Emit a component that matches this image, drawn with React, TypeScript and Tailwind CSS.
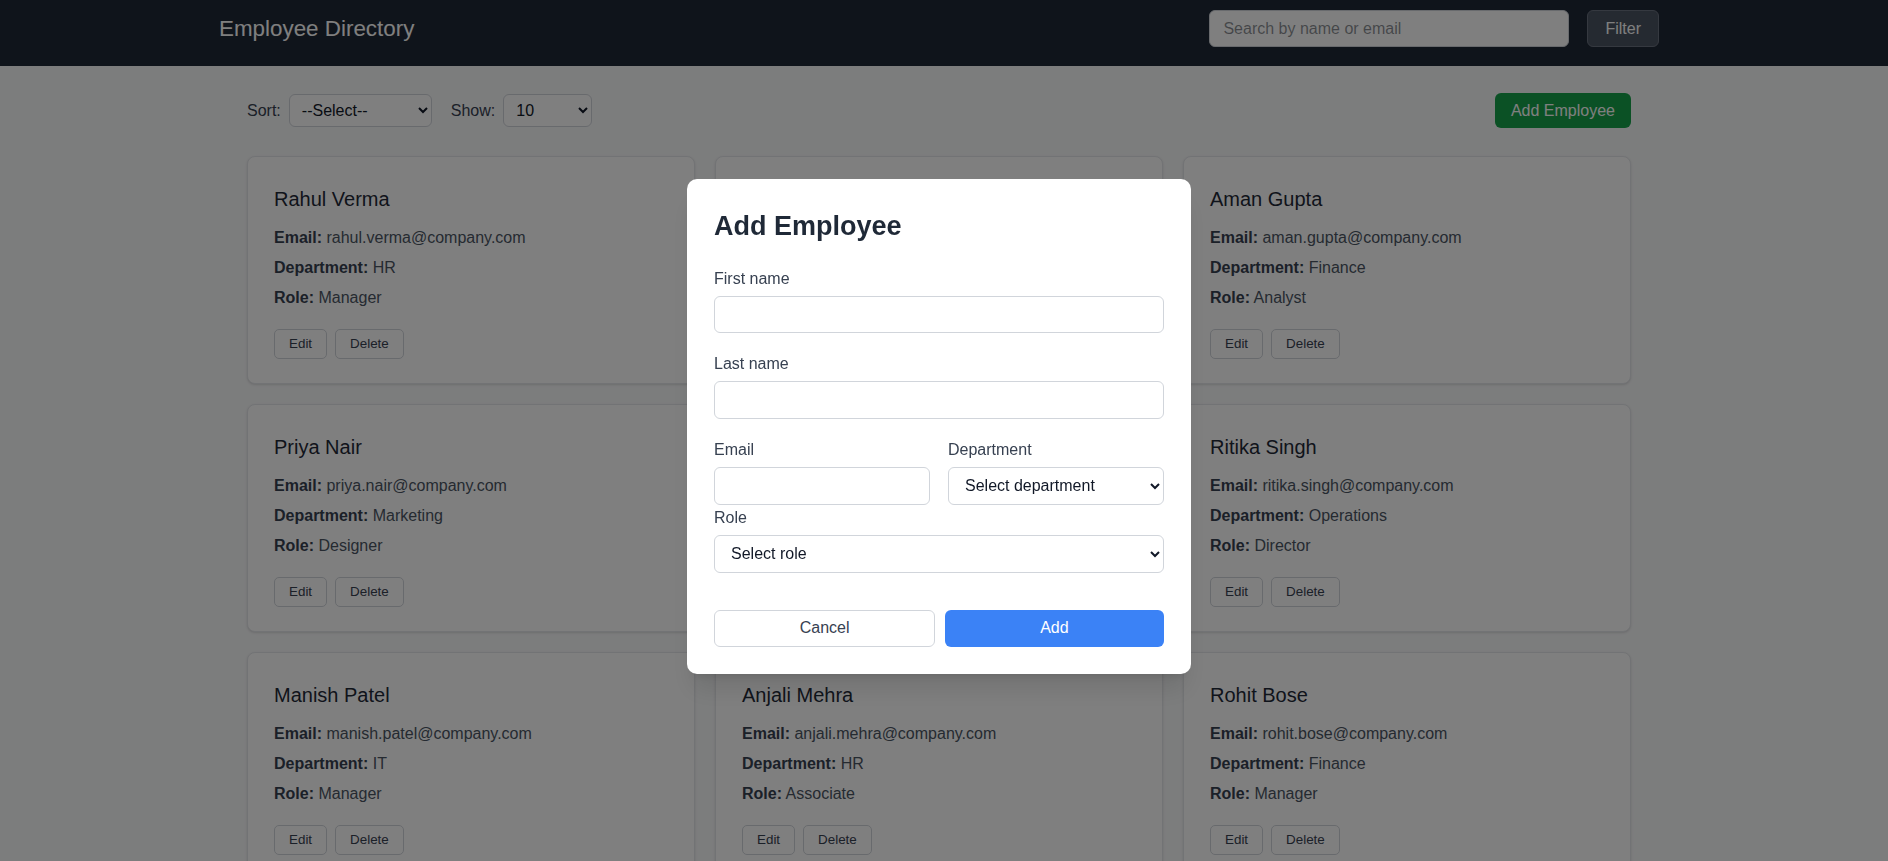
import React from 'react';

type Employee = {
  name: string;
  email: string;
  department: string;
  role: string;
};

const employees: Employee[] = [
  { name: 'Rahul Verma', email: 'rahul.verma@company.com', department: 'HR', role: 'Manager' },
  { name: 'Sneha Iyer', email: 'sneha.iyer@company.com', department: 'IT', role: 'Developer' },
  { name: 'Aman Gupta', email: 'aman.gupta@company.com', department: 'Finance', role: 'Analyst' },
  { name: 'Priya Nair', email: 'priya.nair@company.com', department: 'Marketing', role: 'Designer' },
  { name: 'Vikram Rao', email: 'vikram.rao@company.com', department: 'Sales', role: 'Executive' },
  { name: 'Ritika Singh', email: 'ritika.singh@company.com', department: 'Operations', role: 'Director' },
  { name: 'Manish Patel', email: 'manish.patel@company.com', department: 'IT', role: 'Manager' },
  { name: 'Anjali Mehra', email: 'anjali.mehra@company.com', department: 'HR', role: 'Associate' },
  { name: 'Rohit Bose', email: 'rohit.bose@company.com', department: 'Finance', role: 'Manager' },
];

function EmployeeCard({ emp }: { emp: Employee }) {
  return (
    <div className="rounded-lg border border-[#e5e7eb] bg-white px-[26px] pt-[26px] pb-[24.5px] shadow-sm">
      <h3 className="mt-[2px] mb-[12.5px] text-xl leading-7 text-[#1f2937]">{emp.name}</h3>
      <div className="space-y-[6px] text-base leading-6 text-[#4b5563]">
        <p>
          <strong className="font-bold text-[#374151]">Email:</strong> {emp.email}
        </p>
        <p>
          <strong className="font-bold text-[#374151]">Department:</strong> {emp.department}
        </p>
        <p>
          <strong className="font-bold text-[#374151]">Role:</strong> {emp.role}
        </p>
      </div>
      <div className="mt-[19px] flex gap-2">
        <button className="h-[30px] rounded-[5px] border border-[#d1d5db] px-[14px] text-[13.4px] text-[#374151]">
          Edit
        </button>
        <button className="h-[30px] rounded-[5px] border border-[#d1d5db] px-[14px] text-[13.4px] text-[#374151]">
          Delete
        </button>
      </div>
    </div>
  );
}

function Field({ label, children, className = '' }: { label: string; children: React.ReactNode; className?: string }) {
  return (
    <div className={className}>
      <label className="mb-[5px] block leading-6 text-[#374151]">{label}</label>
      {children}
    </div>
  );
}

const inputCls = 'block h-[37.4px] w-full rounded-md border border-[#d1d5db] bg-white px-3 text-[#111827]';
const selectCls = 'block h-[37.4px] w-full rounded-md border border-[#d1d5db] bg-white px-3 text-[#111827]';

function AddEmployeeModal() {
  return (
    <div className="fixed inset-0 z-50 flex items-center justify-center bg-black/50 pr-[10px] pb-[8px]">
      <div className="w-[504px] rounded-[10px] bg-white px-[27px] pt-[27px] pb-[27px] shadow-xl">
        <h2 className="mb-[20.5px] text-[27px] font-bold leading-[1.5] text-[#1f2937]">Add Employee</h2>

        <Field label="First name" className="mb-[19px]">
          <input type="text" className={inputCls} />
        </Field>

        <Field label="Last name" className="mb-[19.5px]">
          <input type="text" className={inputCls} />
        </Field>

        <div className="grid grid-cols-2 gap-x-[18px]">
          <Field label="Email">
            <input type="email" className={inputCls} />
          </Field>
          <Field label="Department">
            <select className={selectCls} defaultValue="">
              <option value="">Select department</option>
              <option>HR</option>
              <option>IT</option>
              <option>Finance</option>
              <option>Marketing</option>
              <option>Operations</option>
            </select>
          </Field>
        </div>

        <Field label="Role" className="mt-[1.6px]">
          <select className={selectCls} defaultValue="">
            <option value="">Select role</option>
            <option>Manager</option>
            <option>Analyst</option>
            <option>Designer</option>
            <option>Director</option>
            <option>Associate</option>
          </select>
        </Field>

        <div className="mt-[37px] flex gap-[9.5px]">
          <button className="h-[37.4px] flex-1 rounded-md border border-[#d1d5db] bg-white text-[#374151]">
            Cancel
          </button>
          <button className="h-[37.4px] flex-1 rounded-md bg-[#3b82f6] text-white">Add</button>
        </div>
      </div>
    </div>
  );
}

export default function App() {
  return (
    <div className="relative h-[861px] overflow-hidden bg-[#f9fafb] font-['Liberation_Sans',Arial,sans-serif] text-base text-[#111827]">
      {/* Top bar */}
      <header className="h-[66px] bg-[#1f2937] pt-[10px] pr-[10px]">
        <div className="mx-auto flex max-w-[1440px] items-center">
          <h1 className="text-[22.4px] leading-8 text-white">Employee Directory</h1>
          <div className="ml-auto flex items-center">
            <input
              type="text"
              placeholder="Search by name or email"
              className="h-[37.4px] w-[360px] rounded-md border border-[#d1d5db] bg-white px-[13px] text-[#111827]"
            />
            <button className="ml-[18px] h-[37.4px] rounded-md border border-[#6b7280] bg-[#4b5563] px-[17px] text-white">
              Filter
            </button>
          </div>
        </div>
      </header>

      <main className="pr-[10px]">
        <div className="mx-auto max-w-[1440px] px-7 pt-[27px]">
          {/* Toolbar */}
          <div className="mb-[28px] flex h-[35.4px] items-center">
            <label className="mr-2 text-[#374151]">Sort:</label>
            <select className="h-[33.4px] w-[143px] rounded-md border border-[#d1d5db] bg-white px-2 text-[#111827]" defaultValue="">
              <option value="">--Select--</option>
              <option>Name</option>
              <option>Department</option>
            </select>
            <label className="mr-2 ml-[19px] text-[#374151]">Show:</label>
            <select className="h-[33.4px] w-[89px] rounded-md border border-[#d1d5db] bg-white px-2 text-[#111827]" defaultValue="10">
              <option>10</option>
              <option>25</option>
              <option>50</option>
            </select>
            <button className="ml-auto h-[35.4px] rounded-md bg-[#16a34a] px-4 text-white">Add Employee</button>
          </div>

          {/* Cards */}
          <div className="grid grid-cols-3 gap-5">
            {employees.map((emp) => (
              <EmployeeCard key={emp.email} emp={emp} />
            ))}
          </div>
        </div>
      </main>

      <AddEmployeeModal />
    </div>
  );
}
